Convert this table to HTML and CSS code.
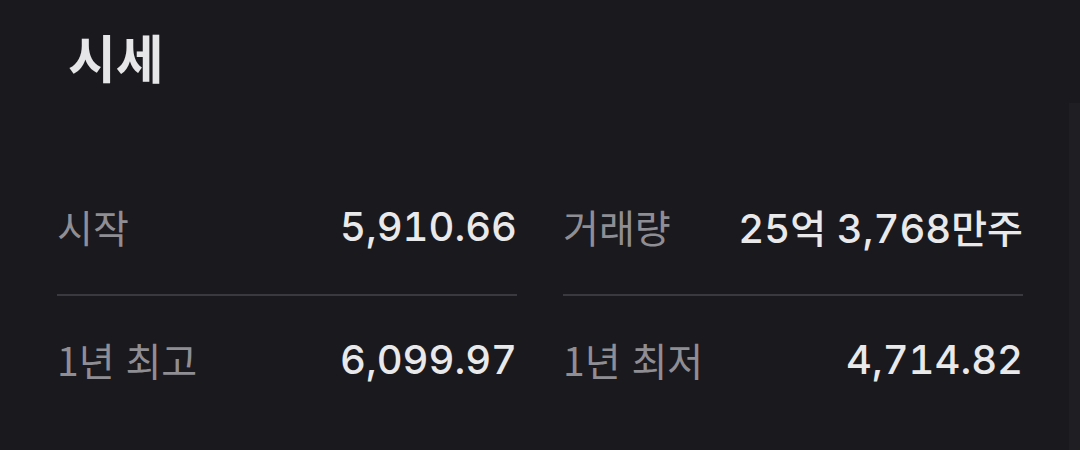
FILE: index.html
```html
<!DOCTYPE html>
<html lang="ko">
<head>
<meta charset="utf-8">
<link rel="stylesheet" href="styles.css">
</head>
<body>
<div class="page">
  <h1 class="title">시세</h1>
  <div class="grid">
    <div class="row first">
      <span class="label">시작</span>
      <span class="value">5,910.66</span>
    </div>
    <div class="row first">
      <span class="label">거래량</span>
      <span class="value">25<span class="unit">억</span> 3,768<span class="unit">만주</span></span>
    </div>
    <div class="row">
      <span class="label">1년 최고</span>
      <span class="value">6,099.97</span>
    </div>
    <div class="row">
      <span class="label">1년 최저</span>
      <span class="value">4,714.82</span>
    </div>
  </div>
  <div class="scrolltrack"></div>
</div>
</body>
</html>
```
FILE: styles.css
```css
html, body {
  margin: 0;
  padding: 0;
  background: #1a191e;
}
.page {
  position: relative;
  width: 1080px;
  height: 450px;
  overflow: hidden;
  padding-left: 57px;
  box-sizing: border-box;
  font-family: Inter, "Noto Sans CJK KR", sans-serif;
}
.title {
  margin: 26px 0 0 11px;
  font-family: "Noto Sans CJK KR", sans-serif;
  font-size: 52px;
  line-height: 62px;
  font-weight: 700;
  color: #e6e6e8;
}
.grid {
  margin-top: 76px;
  display: grid;
  grid-template-columns: 460px 460px;
  grid-template-rows: 132px 126px;
  column-gap: 46px;
}
.row {
  display: flex;
  align-items: center;
  justify-content: space-between;
  font-size: 39px;
}
.row.first {
  border-bottom: 2px solid #3a393f;
  box-sizing: border-box;
  padding-bottom: 6px;
}
.label {
  color: #8f8e94;
  font-family: "Noto Sans CJK KR", sans-serif;
}
.value {
  color: #e9e9eb;
  font-size: 40px;
  font-weight: 500;
  font-variant-numeric: tabular-nums;
}
.unit {
  font-family: "Noto Sans CJK KR", sans-serif;
  font-size: 39px;
  font-weight: 500;
}
.scrolltrack {
  position: absolute;
  right: 0;
  top: 103px;
  bottom: 0;
  width: 11px;
  background: #1f1e23;
}
```
